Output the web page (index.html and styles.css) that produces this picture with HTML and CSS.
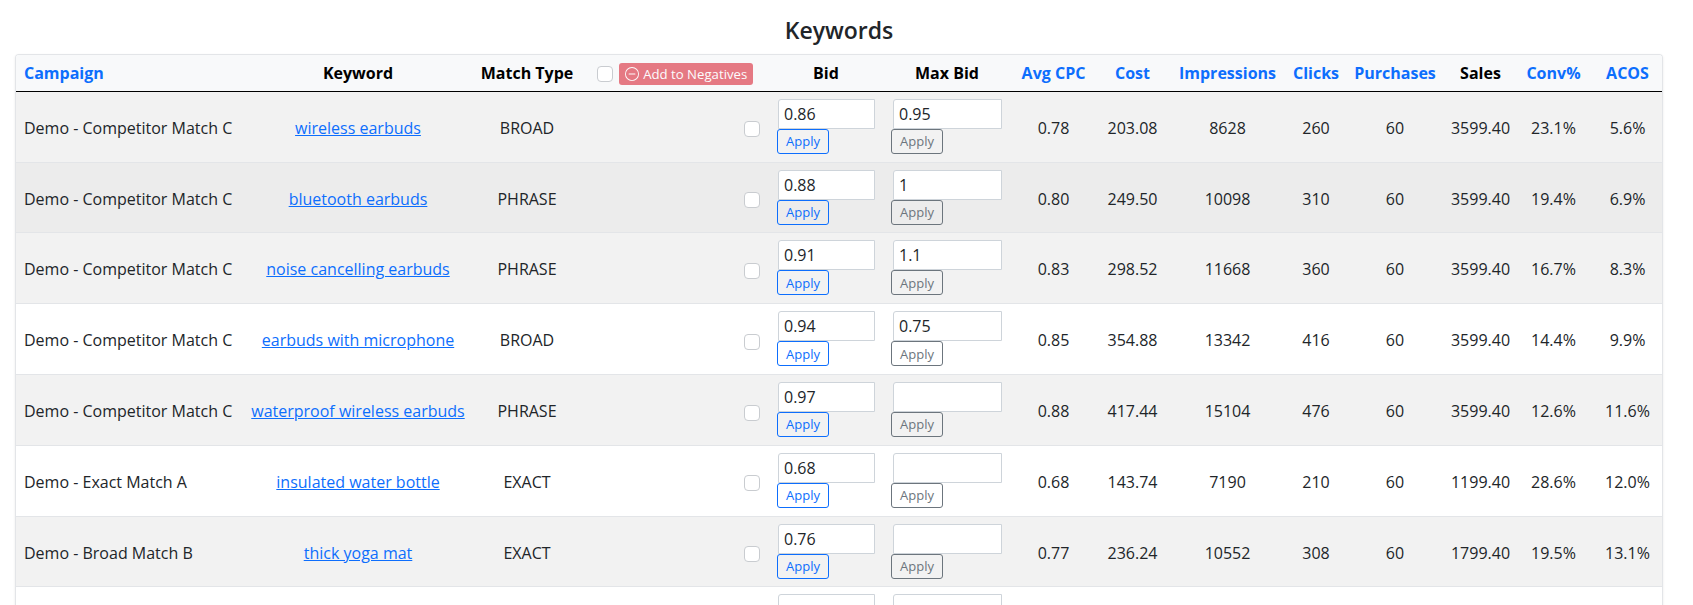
FILE: index.html
```html
<!DOCTYPE html>
<html lang="en">
<head>
    <meta charset="UTF-8">
    <title>Keywords</title>
    <link rel="stylesheet" href="styles.css">
</head>
<body>
    <h2 class="page-title">Keywords</h2>

    <div class="table-card">
        <table class="kw-table">
            <colgroup>
                <col class="c-campaign"><col class="c-keyword"><col class="c-match"><col class="c-check">
                <col class="c-bid"><col class="c-max"><col class="c-cpc"><col class="c-cost">
                <col class="c-impr"><col class="c-clicks"><col class="c-purch"><col class="c-sales">
                <col class="c-conv"><col class="c-acos">
            </colgroup>
            <thead>
                <tr>
                    <th class="left sort">Campaign</th>
                    <th>Keyword</th>
                    <th>Match Type</th>
                    <th class="neg-head">
                        <span class="check"></span>
                        <button class="neg-btn" disabled>
                            <svg viewBox="0 0 16 16" width="14" height="14" fill="currentColor"><path d="M8 15A7 7 0 1 1 8 1a7 7 0 0 1 0 14zm0 1A8 8 0 1 0 8 0a8 8 0 0 0 0 16z"/><path d="M4 8a.5.5 0 0 1 .5-.5h7a.5.5 0 0 1 0 1h-7A.5.5 0 0 1 4 8z"/></svg>
                            Add to Negatives
                        </button>
                    </th>
                    <th>Bid</th>
                    <th class="max-head">Max Bid</th>
                    <th class="sort">Avg CPC</th>
                    <th class="sort">Cost</th>
                    <th class="sort">Impressions</th>
                    <th class="sort">Clicks</th>
                    <th class="sort">Purchases</th>
                    <th>Sales</th>
                    <th class="sort">Conv%</th>
                    <th class="sort">ACOS</th>
                </tr>
            </thead>
            <tbody>
                <tr class="striped">
                    <td class="left">Demo - Competitor Match C</td>
                    <td><a href="#">wireless earbuds</a></td>
                    <td>BROAD</td>
                    <td class="check-cell"><span class="check"></span></td>
                    <td><input class="bid-input" value="0.86"><button class="apply">Apply</button></td>
                    <td><input class="max-input" value="0.95"><button class="apply grey">Apply</button></td>
                    <td>0.78</td><td>203.08</td><td>8628</td><td>260</td><td>60</td><td>3599.40</td><td>23.1%</td><td>5.6%</td>
                </tr>
                <tr class="hovered">
                    <td class="left">Demo - Competitor Match C</td>
                    <td><a href="#">bluetooth earbuds</a></td>
                    <td>PHRASE</td>
                    <td class="check-cell"><span class="check"></span></td>
                    <td><input class="bid-input" value="0.88"><button class="apply">Apply</button></td>
                    <td><input class="max-input" value="1"><button class="apply grey">Apply</button></td>
                    <td>0.80</td><td>249.50</td><td>10098</td><td>310</td><td>60</td><td>3599.40</td><td>19.4%</td><td>6.9%</td>
                </tr>
                <tr class="striped">
                    <td class="left">Demo - Competitor Match C</td>
                    <td><a href="#">noise cancelling earbuds</a></td>
                    <td>PHRASE</td>
                    <td class="check-cell"><span class="check"></span></td>
                    <td><input class="bid-input" value="0.91"><button class="apply">Apply</button></td>
                    <td><input class="max-input" value="1.1"><button class="apply grey">Apply</button></td>
                    <td>0.83</td><td>298.52</td><td>11668</td><td>360</td><td>60</td><td>3599.40</td><td>16.7%</td><td>8.3%</td>
                </tr>
                <tr>
                    <td class="left">Demo - Competitor Match C</td>
                    <td><a href="#">earbuds with microphone</a></td>
                    <td>BROAD</td>
                    <td class="check-cell"><span class="check"></span></td>
                    <td><input class="bid-input" value="0.94"><button class="apply">Apply</button></td>
                    <td><input class="max-input" value="0.75"><button class="apply grey">Apply</button></td>
                    <td>0.85</td><td>354.88</td><td>13342</td><td>416</td><td>60</td><td>3599.40</td><td>14.4%</td><td>9.9%</td>
                </tr>
                <tr class="striped">
                    <td class="left">Demo - Competitor Match C</td>
                    <td><a href="#">waterproof wireless earbuds</a></td>
                    <td>PHRASE</td>
                    <td class="check-cell"><span class="check"></span></td>
                    <td><input class="bid-input" value="0.97"><button class="apply">Apply</button></td>
                    <td><input class="max-input" value=""><button class="apply grey">Apply</button></td>
                    <td>0.88</td><td>417.44</td><td>15104</td><td>476</td><td>60</td><td>3599.40</td><td>12.6%</td><td>11.6%</td>
                </tr>
                <tr>
                    <td class="left">Demo - Exact Match A</td>
                    <td><a href="#">insulated water bottle</a></td>
                    <td>EXACT</td>
                    <td class="check-cell"><span class="check"></span></td>
                    <td><input class="bid-input" value="0.68"><button class="apply">Apply</button></td>
                    <td><input class="max-input" value=""><button class="apply grey">Apply</button></td>
                    <td>0.68</td><td>143.74</td><td>7190</td><td>210</td><td>60</td><td>1199.40</td><td>28.6%</td><td>12.0%</td>
                </tr>
                <tr class="striped">
                    <td class="left">Demo - Broad Match B</td>
                    <td><a href="#">thick yoga mat</a></td>
                    <td>EXACT</td>
                    <td class="check-cell"><span class="check"></span></td>
                    <td><input class="bid-input" value="0.76"><button class="apply">Apply</button></td>
                    <td><input class="max-input" value=""><button class="apply grey">Apply</button></td>
                    <td>0.77</td><td>236.24</td><td>10552</td><td>308</td><td>60</td><td>1799.40</td><td>19.5%</td><td>13.1%</td>
                </tr>
                <tr>
                    <td class="left"></td>
                    <td></td>
                    <td></td>
                    <td class="check-cell"></td>
                    <td><input class="bid-input" value=""></td>
                    <td><input class="max-input" value=""></td>
                    <td></td><td></td><td></td><td></td><td></td><td></td><td></td><td></td>
                </tr>
            </tbody>
        </table>
    </div>
</body>
</html>
```

FILE: styles.css
```css
html, body {
    height: 100%;
    overflow: hidden;
}

body {
    margin: 0;
    padding: 0 30px 0 15px;
    font-family: "Open Sans", "Noto Sans", sans-serif;
    font-size: 16px;
    color: #212529;
    background-color: #fff;
}

.page-title {
    margin: 0;
    height: 54px;
    line-height: 60px;
    text-align: center;
    font-size: 23px;
    font-weight: 600;
}

.table-card {
    border: 1px solid #e3e5e8;
    border-bottom: none;
    border-radius: 4px 4px 0 0;
    box-shadow: 0 1px 3px rgba(0, 0, 0, 0.08);
    overflow: hidden;
}

.kw-table {
    width: 100%;
    table-layout: fixed;
    border-collapse: separate;
    border-spacing: 0;
}

.c-campaign { width: 227px; }
.c-keyword { width: 230px; }
.c-match { width: 108px; }
.c-check { width: 188px; }
.c-bid { width: 114px; }
.c-max { width: 125px; }
.c-cpc { width: 91px; }
.c-cost { width: 67px; }
.c-impr { width: 123px; }
.c-clicks { width: 54px; }
.c-purch { width: 104px; }
.c-sales { width: 67px; }
.c-conv { width: 79px; }
.c-acos { width: 69px; }

.kw-table th,
.kw-table td {
    padding: 8.5px 0 6.3px;
    text-align: center;
    vertical-align: middle;
    white-space: nowrap;
}

.kw-table th {
    padding: 6px 0;
    font-weight: 700;
    color: #000;
    background-color: #f8f9fa;
    border-bottom: 1px solid #000;
}

.kw-table th.sort {
    color: #0d6efd;
}

.kw-table th.max-head {
    padding-left: 3px;
}

.kw-table .left {
    padding-left: 8px;
    text-align: left;
}

.kw-table td {
    border-bottom: 1px solid #e3e5e8;
}

.striped td {
    background-color: #f2f2f2;
}

.hovered td {
    background-color: #ececec;
}

a {
    color: #0d6efd;
}

.check {
    display: inline-block;
    box-sizing: border-box;
    width: 16px;
    height: 16px;
    background-color: #fff;
    border: 1px solid #c9ccd0;
    border-radius: 4px;
    vertical-align: middle;
}

.kw-table .neg-head {
    padding-left: 16px;
    text-align: left;
}

.neg-btn {
    display: inline-flex;
    align-items: center;
    gap: 4px;
    height: 22px;
    margin-left: 2px;
    padding: 0 6px;
    border: none;
    border-radius: 3px;
    color: #fff;
    background-color: #dc3545;
    opacity: 0.65;
    font-family: inherit;
    font-size: 13.2px;
    vertical-align: middle;
}

.check-cell {
    text-align: right !important;
    padding-right: 9px !important;
}

.bid-input,
.max-input {
    display: block;
    box-sizing: border-box;
    height: 30px;
    margin-top: -1.5px;
    padding: 0 5px;
    border: 1px solid #ced4da;
    border-radius: 3px 0 0 0;
    background-color: #fff;
    color: #212529;
    font-family: inherit;
    font-size: 16px;
}

.bid-input {
    width: 97px;
    margin-left: 9px;
}

.max-input {
    width: 109px;
    margin-left: 10px;
}

.apply {
    display: block;
    box-sizing: border-box;
    width: 52px;
    height: 25px;
    margin-left: 8px;
    margin-bottom: 1.5px;
    padding: 0;
    border: 1px solid #0d6efd;
    border-radius: 3px;
    background: transparent;
    color: #0d6efd;
    font-family: inherit;
    font-size: 13px;
}

.apply.grey {
    border-color: #6c757d;
    color: #6c757d;
}
```
